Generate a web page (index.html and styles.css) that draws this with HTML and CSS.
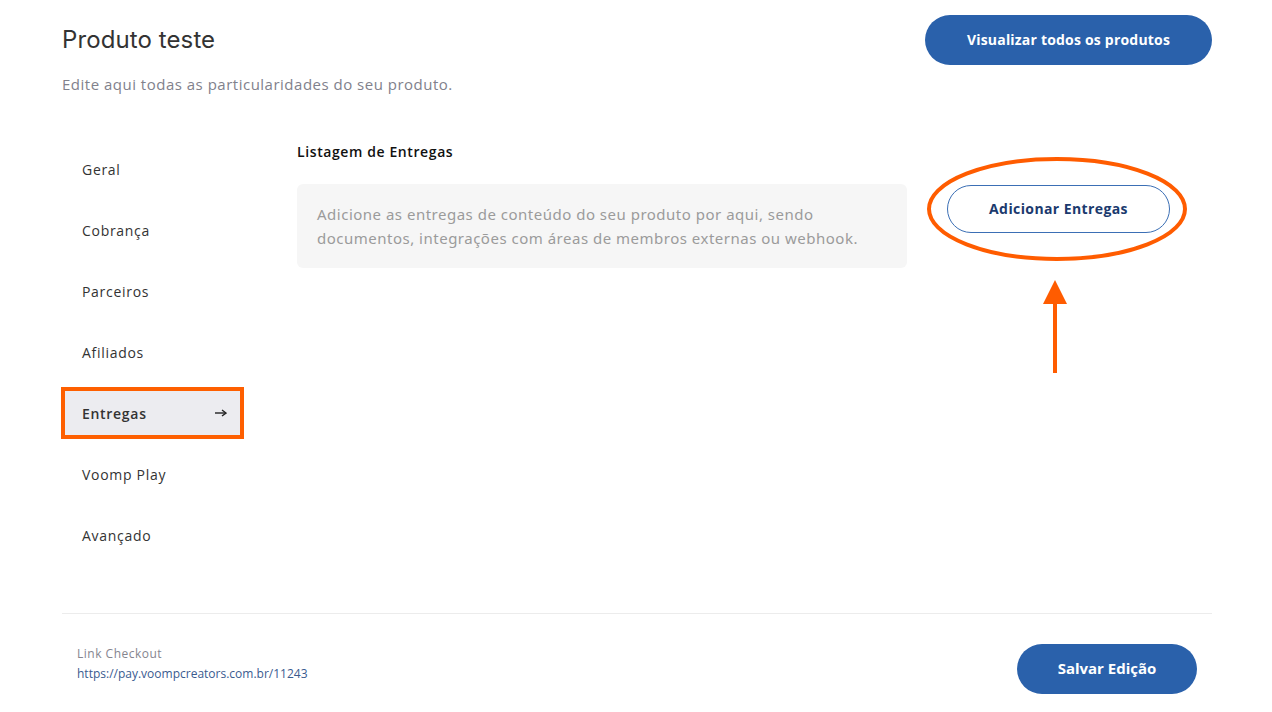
FILE: index.html
```html
<!DOCTYPE html>
<html lang="pt-BR">
<head>
<meta charset="utf-8">
<title>Produto teste</title>
<link rel="stylesheet" href="styles.css">
</head>
<body>
<div class="page">
  <header class="header">
    <div class="head-text">
      <h1 class="title">Produto teste</h1>
      <p class="subtitle">Edite aqui todas as particularidades do seu produto.</p>
    </div>
    <button class="btn btn-primary btn-top">Visualizar todos os produtos</button>
  </header>

  <div class="main">
    <nav class="sidebar">
      <a class="nav-item">Geral</a>
      <a class="nav-item">Cobrança</a>
      <a class="nav-item">Parceiros</a>
      <a class="nav-item">Afiliados</a>
      <a class="nav-item active">Entregas
        <svg class="arrow" width="12" height="8" viewBox="0 0 12 8"><line x1="0" y1="4" x2="10" y2="4" stroke="#222" stroke-width="1.4"/><path d="M7 1 L11 4 L7 7" fill="none" stroke="#222" stroke-width="1.4"/></svg>
      </a>
      <a class="nav-item">Voomp Play</a>
      <a class="nav-item">Avançado</a>
    </nav>

    <section class="content">
      <h2 class="section-title">Listagem de Entregas</h2>
      <div class="row">
        <div class="info-box">Adicione as entregas de conteúdo do seu produto por aqui, sendo documentos, integrações com áreas de membros externas ou webhook.</div>
        <div class="add-wrap">
          <button class="btn btn-outline">Adicionar Entregas</button>
          <svg class="annot" width="270" height="240" viewBox="0 0 270 240">
            <ellipse cx="130" cy="52" rx="128" ry="50" fill="none" stroke="#ff5c00" stroke-width="4"/>
            <polygon points="128,123 116,147 140,147" fill="#ff5c00"/>
            <line x1="128" y1="146" x2="128" y2="216" stroke="#ff5c00" stroke-width="4"/>
          </svg>
        </div>
      </div>
    </section>
  </div>

  <footer class="footer">
    <div class="link-block">
      <div class="link-label">Link Checkout</div>
      <a class="link-url">https://pay.voompcreators.com.br/11243</a>
    </div>
    <button class="btn btn-primary btn-save">Salvar Edição</button>
  </footer>
</div>
</body>
</html>
```

FILE: styles.css
```css
* { box-sizing: border-box; }
html, body { margin: 0; padding: 0; background: #fff; }
body {
  font-family: "Open Sans", "Liberation Sans", sans-serif;
  color: #333;
}
.page {
  width: 1272px;
  height: 712px;
  padding: 15px 60px 0 62px;
  display: flex;
  flex-direction: column;
}
.header {
  display: flex;
  justify-content: space-between;
  align-items: flex-start;
}
.title {
  margin: 10px 0 0 0;
  font-family: "Inter", "Open Sans", sans-serif;
  font-weight: 400;
  font-size: 24px;
  line-height: 30px;
  color: #333;
  letter-spacing: 0.1px;
}
.subtitle {
  margin: 19px 0 0 0;
  font-size: 15px;
  line-height: 20px;
  color: #81818c;
  letter-spacing: 0.5px;
}
.btn {
  font-family: "Open Sans", "Liberation Sans", sans-serif;
  font-weight: 700;
  font-size: 14px;
  border-radius: 26px;
  cursor: pointer;
  padding: 0 0 2px 0;
}
.btn-primary {
  background: #2a61ab;
  color: #fff;
  border: none;
}
.btn-top {
  width: 287px;
  height: 50px;
  letter-spacing: 0.2px;
}
.main {
  display: flex;
  margin-top: 44px;
  flex: 1;
}
.sidebar {
  width: 183px;
  margin-left: -1px;
  padding-top: 5px;
  display: flex;
  flex-direction: column;
  gap: 9px;
}
.nav-item {
  height: 52px;
  display: flex;
  align-items: center;
  justify-content: space-between;
  padding: 0 18px 0 21px;
  font-size: 14px;
  letter-spacing: 0.7px;
  color: #333;
  font-weight: 500;
}
.nav-item.active {
  background: #ececf0;
  font-weight: 600;
  outline: 4px solid #fe5f00;
  outline-offset: -4px;
  padding-right: 17px;
}
.arrow { display: block; }
.content {
  margin-left: 53px;
  flex: 1;
}
.section-title {
  margin: 4px 0 0 0;
  font-size: 14px;
  font-weight: 600;
  line-height: 20px;
  letter-spacing: 0.6px;
  color: #111;
}
.row {
  display: flex;
  margin-top: 22px;
  align-items: flex-start;
}
.info-box {
  width: 610px;
  height: 84px;
  background: #f6f6f6;
  border-radius: 6px;
  padding: 18px 20px;
  font-family: "Noto Sans", "Open Sans", sans-serif;
  font-size: 15px;
  line-height: 24px;
  letter-spacing: 0.5px;
  color: #9b9b9b;
}
.add-wrap {
  position: relative;
  margin-left: 40px;
  margin-top: 1px;
}
.btn-outline {
  width: 223px;
  height: 48px;
  background: #fff;
  border: 1px solid #3b6fb5;
  color: #1b3a6e;
  font-size: 14px;
  letter-spacing: 0.4px;
  border-radius: 24px;
  position: relative;
}
.annot {
  position: absolute;
  left: -20px;
  top: -28px;
  pointer-events: none;
}
.footer {
  border-top: 1px solid #ececec;
  display: flex;
  justify-content: space-between;
  align-items: flex-start;
  padding: 30px 15px 0 15px;
  height: 99px;
}
.link-block { padding-top: 1px; }
.link-label {
  font-size: 12px;
  line-height: 18px;
  color: #85858f;
  letter-spacing: 0.5px;
}
.link-url {
  display: block;
  margin-top: 2px;
  font-size: 12px;
  line-height: 18px;
  color: #3a5b8f;
}
.btn-save {
  width: 180px;
  height: 50px;
  font-size: 15px;
}
```
